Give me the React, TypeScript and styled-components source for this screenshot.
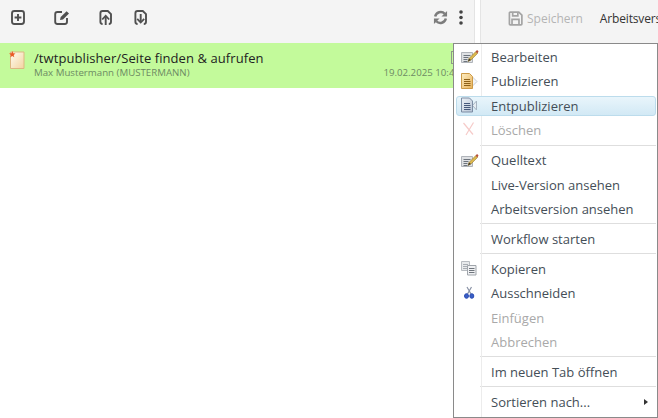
import React from 'react';
import styled, { createGlobalStyle } from 'styled-components';

const Global = createGlobalStyle`
  html, body { margin: 0; padding: 0; background: #fff; overflow: hidden; }
  #root { width: 658px; height: 418px; }
`;
const Page = styled.div`
  position: relative; width: 658px; height: 418px; overflow: hidden;
  font-family: "Open Sans", "Liberation Sans", sans-serif; display: flex; background: #fff;
`;
const LeftPane = styled.div`width: 474px; flex-shrink: 0; display: flex; flex-direction: column; border-right: 1px solid #e4e4e4;`;
const RightPane = styled.div`flex: 1; border-left: 1px solid #e4e4e4; margin-left: 5px; min-width: 0;`;
const Toolbar = styled.div`
  height: 43px; background: #f4f4f4; display: flex; align-items: center; padding: 0 11px 8px 9px; box-sizing: border-box;
`;
const ToolButton = styled.div<{ $width: number }>`width: ${p => p.$width}px; height: 17px; flex-shrink: 0; svg { display: block; }`;
const Sync = styled.div`margin-right: 11px; height: 15px; svg { display: block; }`;
const More = styled.div`height: 15px; svg { display: block; }`;
const RightBar = styled.div`
  height: 43px; background: #f4f4f4; display: flex; align-items: center; padding: 0 0 7px 27px; box-sizing: border-box; white-space: nowrap; overflow: hidden;
  svg { flex-shrink: 0; }
`;
const Spacer = styled.div`flex: 1;`;
const Row = styled.div`
  height: 44.5px; background: #c3fa9b; display: flex; padding: 8px 0 0 9px; gap: 9px; box-sizing: border-box;
  > svg { flex-shrink: 0; }
`;
const RowBody = styled.div`flex: 1; min-width: 0;`;
const RowTitleLine = styled.div`display: flex; justify-content: space-between; align-items: flex-start;`;
const RowTitle = styled.div`font-size: 13px; line-height: 15px; color: #222; letter-spacing: 0.08px;`;
const RowBadge = styled.div`width: 10px; height: 13px; border: 1px solid #8f9a88; margin-right: 13px; box-sizing: border-box;`;
const RowMeta = styled.div`display: flex; justify-content: space-between; font-size: 9.7px; line-height: 12px; color: #6d8a63; margin-top: 1px; padding-right: 14px; white-space: nowrap;`;
const Save = styled.span`font-size: 12px; color: #b4b4b4; margin-left: 4px; margin-right: 17px;`;
const Version = styled.span`font-size: 12px; color: #333; letter-spacing: -0.15px;`;
const Menu = styled.div`
  position: absolute; left: 453px; top: 43px; width: 205px; height: 375px; box-sizing: border-box;
  background: #fff; border: 1px solid #8a8a8a; padding: 3px 1px 0 2px; display: flex; flex-direction: column; overflow: hidden;
`;
const MenuRail = styled.div`position: absolute; left: 27px; top: 0; bottom: 0; width: 1px; background: #ececec;`;
const Item = styled.div<{ $disabled?: boolean; $active?: boolean }>`
  position: relative; height: 20px; flex-shrink: 0; margin-bottom: 4.4px; display: flex; align-items: center; padding-left: 34px; box-sizing: border-box; font-size: 13px;
  color: ${p => (p.$disabled ? '#a9a9a9' : '#444e57')};
  border: 1px solid ${p => (p.$active ? '#bcdcec' : 'transparent')};
  border-radius: 3px;
  background: ${p => (p.$active ? 'linear-gradient(#e9f5fb,#d2e9f5)' : 'transparent')};
`;
const IconSlot = styled.span`position: absolute; left: 4px; top: 0; width: 18px; height: 18px; display: block; svg { display: block; }`;
const Separator = styled.div`height: 1px; flex-shrink: 0; background: #dedede; margin: 0 0 4.6px 24px;`;
const Arrow = styled.span`position: absolute; right: 7px; top: 6px; width: 0; height: 0; border-left: 4px solid #333; border-top: 3px solid transparent; border-bottom: 3px solid transparent;`;

const Doc = ({ kind }: { kind: 'plus' | 'edit' | 'up' | 'down' }) => (
  <svg width="17" height="17" viewBox="0 0 17 17" fill="none" stroke="#505050" strokeWidth="1.9">
    {kind === 'plus' && <><rect x="3" y="2" width="12" height="13" rx="2.4" /><path d="M9 5v7M5.600 8.500h6.800" /></>}
    {kind === 'edit' && <><path d="M9 3H4.400C3 3 2.200 3.800 2.200 5.200v7.600c0 1.400.8 2.200 2.200 2.200h7.400c1.400 0 2.200-.8 2.200-2.200V9" /><path d="M7 11l.7-3L13.600 2.200l2.400 2.300-6 5.900z" fill="#505050" stroke="none" /></>}
    {(kind === 'up' || kind === 'down') && <path d="M5.600 15c-1.400 0-2.200-.8-2.200-2.200V4.200C3.400 2.800 4.200 2 5.600 2H10.800l3.200 3.200v7.600c0 1.400-.8 2.200-2.200 2.200" />}
    {kind === 'up' && <><path d="M8.700 16V8" /><path d="M5.200 10.500l3.500-3.700 3.500 3.700" strokeWidth="1.800" /></>}
    {kind === 'down' && <><path d="M8.700 5v8" /><path d="M5.200 9.800l3.500 3.700 3.500-3.700" strokeWidth="1.800" /></>}
  </svg>
);

const Refresh = () => (
  <svg width="15" height="15" viewBox="0 0 16 16" fill="none" stroke="#7c7c7c" strokeWidth="2.600">
    <path d="M2.300 7A6 6 0 0 1 12.500 4" /><path d="M13.700 9A6 6 0 0 1 3.500 12" />
    <path d="M15 1v6H9z" fill="#7c7c7c" stroke="none" /><path d="M1 15V9h6z" fill="#7c7c7c" stroke="none" />
  </svg>
);
const Kebab = () => (
  <svg width="4" height="15" viewBox="0 0 4 15" fill="#444"><circle cx="2" cy="2" r="1.800" /><circle cx="2" cy="7.500" r="1.800" /><circle cx="2" cy="13" r="1.800" /></svg>
);
const Floppy = () => (
  <svg width="15" height="15" viewBox="0 0 16 16" fill="none" stroke="#a4a4a4" strokeWidth="1.800">
    <path d="M2.500 1.200h9l3.300 3.300v9.300a1 1 0 0 1-1 1h-11.300a1 1 0 0 1-1-1v-11.600a1 1 0 0 1 1-1z" />
    <path d="M5 1.500v3.700h5.500V1.500M4.300 14.500V9h7.400v5.500" />
  </svg>
);
const NewDoc = () => (
  <svg width="16" height="18" viewBox="0 0 16 18">
    <defs>
      <linearGradient id="paper" x1="0" y1="0" x2="1" y2="1"><stop offset="0" stopColor="#fffdf2" /><stop offset="1" stopColor="#f3d3a0" /></linearGradient>
    </defs>
    <path d="M1.500 1h13.500v16.500H1.500z" fill="url(#paper)" stroke="#dcb782" strokeWidth="1" />
    <path d="M3.300 0l.9 2.200 2.300.2-1.800 1.500.6 2.300-2-1.300-2 1.300.6-2.300L0 2.400l2.400-.2z" fill="#ea5a26" />
  </svg>
);
const Lines = ({ c }: { c: string }) => <path d="M3 6.500h6M3 8.500h6.500M3 10.500h6.500M3 12.500h6.500" stroke={c} strokeWidth="1" />;
const EditIcon = ({ y = 2 }: { y?: number }) => (
  <svg width="18" height="18" viewBox="0 0 18 18">
    <g transform={`translate(0 ${y})`}>
      <path d="M.5 2.500h11v10H.5z" fill="#dfe1e4" stroke="#b0b4ba" />
      <path d="M2.500 5.500h7M2.500 7.500h5M2.500 9.500h4M2.500 11.500h4" stroke="#6d747d" strokeWidth="1" />
      <path d="M7 11.500l1-3L14.500 1.800l2 1.700L10 10z" fill="#dcb84e" stroke="#8a6d25" strokeWidth=".5" />
      <path d="M14.500 1.800L16 0l1.500 1.300-1 2.200z" fill="#b8533a" />
      <path d="M7 11.500l1-3 2 1.500z" fill="#3f3a2c" />
    </g>
  </svg>
);
const PublishIcon = () => (
  <svg width="18" height="18" viewBox="0 0 18 18">
    <defs><linearGradient id="pub" x1="0" y1="0" x2="1" y2="1"><stop offset="0" stopColor="#fdeec4" /><stop offset="1" stopColor="#e8b25a" /></linearGradient></defs>
    <path d="M11.500 5l4.500 4.500-4.500 4.500z" fill="#f4f6f8" stroke="#c9ced6" />
    <path d="M.5 1.500h8l3 3v12H.5z" fill="url(#pub)" stroke="#cc9a47" />
    <g transform="translate(0 1)"><Lines c="#8d6118" /></g>
  </svg>
);
const UnpublishIcon = () => (
  <svg width="18" height="18" viewBox="0 0 18 18">
    <defs><linearGradient id="unp" x1="0" y1="0" x2="1" y2="1"><stop offset="0" stopColor="#eef2f7" /><stop offset="1" stopColor="#b6c3d4" /></linearGradient></defs>
    <path d="M15.500 4l-4 4.500 4 4.500z" fill="#e6edf3" stroke="#a7b4c2" />
    <path d="M.5 1h8l3 3v11H.5z" fill="url(#unp)" stroke="#7c8ca3" />
    <Lines c="#46587a" />
  </svg>
);
const DeleteIcon = () => (
  <svg width="18" height="18" viewBox="0 0 18 18" fill="none" stroke="#f6cbc9" strokeWidth="1.200"><path d="M2.500 2l9.500 11.500M12.500 1.500L5 14" /></svg>
);
const CopyIcon = () => (
  <svg width="18" height="18" viewBox="0 0 18 18">
    <path d="M.5 1.500h8v9h-8z" fill="#e8eaec" stroke="#b8bcc1" />
    <path d="M2 4.500h5M2 6.500h5M2 8.500h5" stroke="#a8adb3" />
    <path d="M6.500 5.500h8.500v9.500H6.500z" fill="#f0f1f3" stroke="#a0a5ab" />
    <path d="M8 8.500h5.500M8 10.500h5.500M8 12.500h5.500" stroke="#6f757d" />
  </svg>
);
const CutIcon = () => (
  <svg width="18" height="18" viewBox="0 0 18 18">
    <path d="M6 3l4 7M10.500 3L6.500 10" stroke="#8a93a6" strokeWidth="1.200" fill="none" />
    <ellipse cx="5.500" cy="12" rx="2" ry="2.300" fill="#3a5fc4" stroke="#2a4bb5" />
    <ellipse cx="10.800" cy="12" rx="2" ry="2.300" fill="#3a5fc4" stroke="#2a4bb5" />
  </svg>
);

type Entry = { label: string; icon?: React.ReactNode; disabled?: boolean; active?: boolean; arrow?: boolean; sep?: boolean };
const entries: Entry[] = [
  { label: 'Bearbeiten', icon: <EditIcon y={2} /> },
  { label: 'Publizieren', icon: <PublishIcon /> },
  { label: 'Entpublizieren', icon: <UnpublishIcon />, active: true },
  { label: 'Löschen', icon: <DeleteIcon />, disabled: true, sep: true },
  { label: 'Quelltext', icon: <EditIcon y={3} /> },
  { label: 'Live-Version ansehen' },
  { label: 'Arbeitsversion ansehen', sep: true },
  { label: 'Workflow starten', sep: true },
  { label: 'Kopieren', icon: <CopyIcon /> },
  { label: 'Ausschneiden', icon: <CutIcon /> },
  { label: 'Einfügen', disabled: true },
  { label: 'Abbrechen', disabled: true, sep: true },
  { label: 'Im neuen Tab öffnen', sep: true },
  { label: 'Sortieren nach...', arrow: true },
];

export default function App() {
  return (
    <Page>
      <Global />
      <LeftPane>
        <Toolbar>
          <ToolButton $width={44}><Doc kind="plus" /></ToolButton>
          <ToolButton $width={44}><Doc kind="edit" /></ToolButton>
          <ToolButton $width={35}><Doc kind="up" /></ToolButton>
          <ToolButton $width={17}><Doc kind="down" /></ToolButton>
          <Spacer />
          <Sync><Refresh /></Sync>
          <More><Kebab /></More>
        </Toolbar>
        <Row>
          <NewDoc />
          <RowBody>
            <RowTitleLine>
              <RowTitle>/twtpublisher/Seite finden &amp; aufrufen</RowTitle>
              <RowBadge />
            </RowTitleLine>
            <RowMeta><span>Max Mustermann (MUSTERMANN)</span><span>19.02.2025 10:45</span></RowMeta>
          </RowBody>
        </Row>
      </LeftPane>
      <RightPane>
        <RightBar>
          <Floppy />
          <Save>Speichern</Save>
          <Version>Arbeitsversion</Version>
        </RightBar>
      </RightPane>
      <Menu>
        <MenuRail />
        {entries.map(e => (
          <React.Fragment key={e.label}>
            <Item $disabled={e.disabled} $active={e.active}>
              {e.icon && <IconSlot>{e.icon}</IconSlot>}
              {e.label}
              {e.arrow && <Arrow />}
            </Item>
            {e.sep && <Separator />}
          </React.Fragment>
        ))}
      </Menu>
    </Page>
  );
}
